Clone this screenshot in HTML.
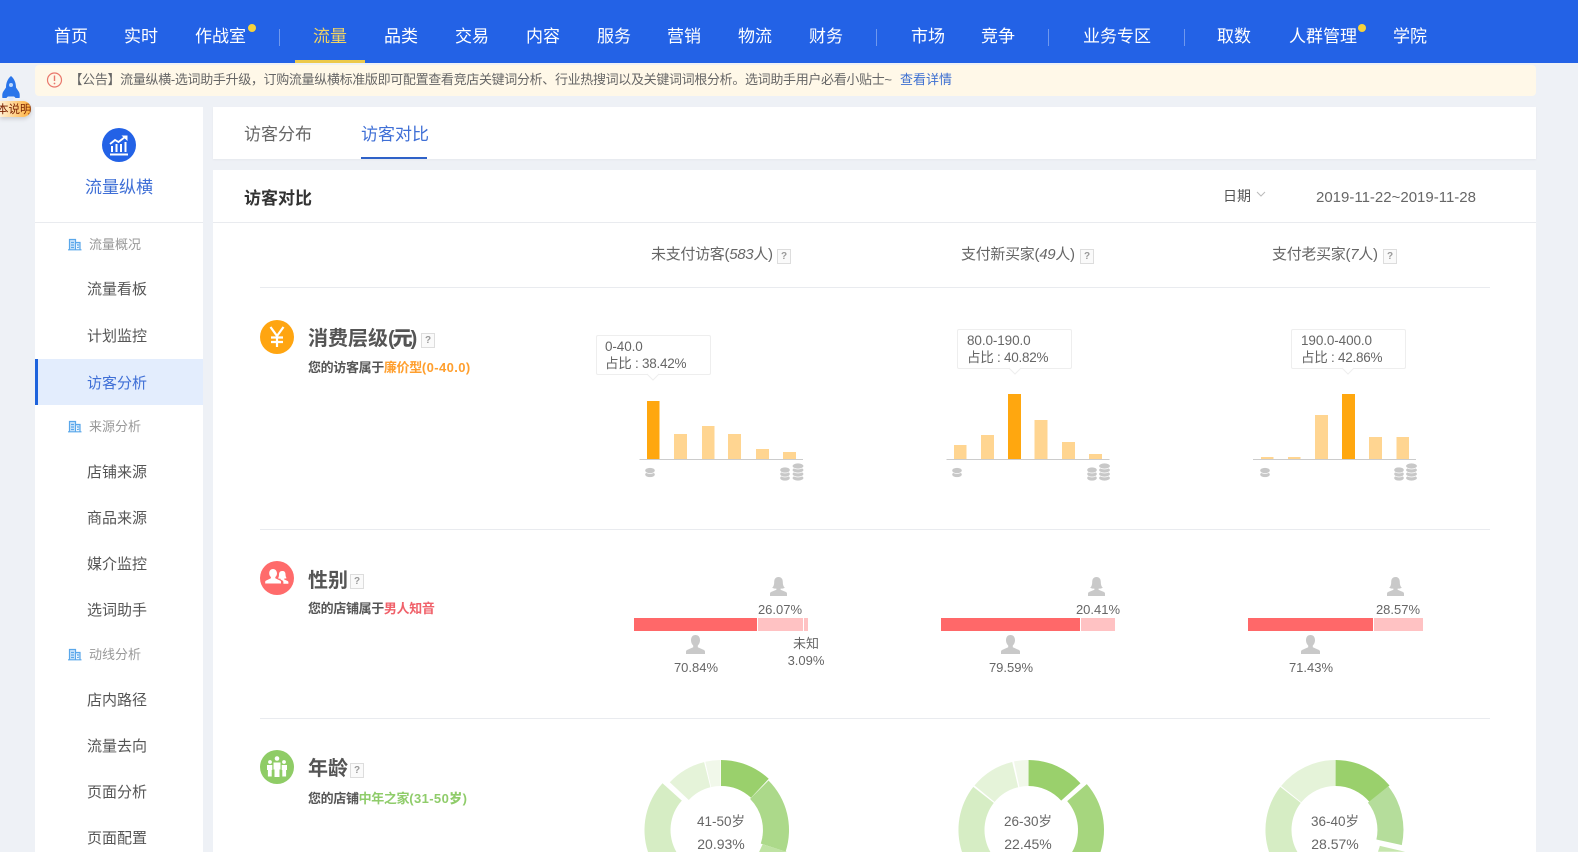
<!DOCTYPE html>
<html lang="zh"><head><meta charset="utf-8"><title>访客对比</title>
<style>
html,body{margin:0;padding:0;overflow:hidden;height:852px}
body{width:1578px;position:relative;background:#eef1f6;font-family:"Liberation Sans","Noto Sans CJK SC",sans-serif;color:#555}
.a{position:absolute;white-space:nowrap;line-height:20px}
#hd{position:absolute;left:0;top:0;width:1578px;height:63px;background:#2362e6}
.n{position:absolute;top:26px;font-size:17px;line-height:22px;color:#fff;white-space:nowrap}
.dv{position:absolute;top:29px;width:1px;height:17px;background:#6f98ee}
.dot{position:absolute;top:24px;width:8px;height:8px;border-radius:50%;background:#f6d23c}
#notice{position:absolute;left:35px;top:65px;width:1501px;height:31px;background:#fff8e8;border-radius:4px}
#side{position:absolute;left:35px;top:107px;width:168px;height:745px;background:#fff}
#tabs{position:absolute;left:213px;top:107px;width:1323px;height:52px;background:#fff;box-shadow:0 1px 2px rgba(0,0,0,.04)}
#main{position:absolute;left:213px;top:170px;width:1323px;height:682px;background:#fff}
.hr{position:absolute;height:1px;background:#e9ebef}
.s1{font-size:13px;color:#999}
.s2{font-size:15px;color:#555}
.q{position:absolute;width:12px;height:13px;border:1px solid #ddd;font-size:10px;line-height:13px;text-align:center;color:#999;font-weight:bold;background:#fafafa}
.h{font-size:15px;color:#666;letter-spacing:-.3px}
.h i{font-style:italic}
.t{font-size:20px;font-weight:bold;color:#555}
.t b{letter-spacing:-2px}
.sub{font-size:13px;font-weight:bold;color:#555;letter-spacing:-.35px}
.sub b{letter-spacing:.4px}
.tip{position:absolute;width:113px;height:38px;border:1px solid #eee;border-radius:2px;background:#fff;font-size:13.5px;line-height:17px;color:#666;white-space:nowrap}
.tip div{padding-left:8px;letter-spacing:-.1px}
.tip div+div{letter-spacing:-.25px}
.v{font-size:13px;color:#666;text-align:center;width:80px}
.d{line-height:16px}
.b{position:absolute;top:618px;height:13px}
.r{background:#ff6869}.p{background:#ffc2c3}
</style></head><body>

<div id="hd">
<span class="n" style="left:54px">首页</span>
<span class="n" style="left:124px">实时</span>
<span class="n" style="left:195px">作战室</span><i class="dot" style="left:248px"></i>
<i class="dv" style="left:279px"></i>
<span class="n" style="left:313px;color:#f0d364">流量</span>
<i style="position:absolute;left:295px;top:60px;width:70px;height:3px;background:#ecc94b"></i>
<span class="n" style="left:384px">品类</span>
<span class="n" style="left:455px">交易</span>
<span class="n" style="left:526px">内容</span>
<span class="n" style="left:597px">服务</span>
<span class="n" style="left:667px">营销</span>
<span class="n" style="left:738px">物流</span>
<span class="n" style="left:809px">财务</span>
<i class="dv" style="left:876px"></i>
<span class="n" style="left:911px">市场</span>
<span class="n" style="left:981px">竞争</span>
<i class="dv" style="left:1048px"></i>
<span class="n" style="left:1083px">业务专区</span>
<i class="dv" style="left:1184px"></i>
<span class="n" style="left:1217px">取数</span>
<span class="n" style="left:1289px">人群管理</span><i class="dot" style="left:1358px"></i>
<span class="n" style="left:1393px">学院</span>
</div>

<div id="notice"></div>
<div class="a" style="left:69.500px;top:70px;font-size:13px;letter-spacing:-.33px;color:#666">【公告】流量纵横-选词助手升级，订购流量纵横标准版即可配置查看竞店关键词分析、行业热搜词以及关键词词根分析。选词助手用户必看小贴士~</div>
<div class="a" style="left:900px;top:70px;font-size:13px;color:#3d6fd1">查看详情</div>

<div style="position:absolute;left:0;top:101px;width:31px;height:16px;border-radius:0 8px 8px 0;background:linear-gradient(90deg,#fff0d4,#ffb13c);box-shadow:0 2px 4px rgba(0,0,0,.15);overflow:hidden"><span style="position:absolute;left:-3px;top:-1px;font-size:11.5px;line-height:20px;color:#7a2200;white-space:nowrap">本说明</span></div>

<div id="side"></div>
<div class="a" style="left:85px;top:178px;font-size:17px;color:#3f6fd6">流量纵横</div>
<div class="hr" style="left:35px;top:222px;width:168px"></div>
<div style="position:absolute;left:35px;top:359px;width:168px;height:46px;background:#e3edfd"></div>
<div style="position:absolute;left:35px;top:359px;width:3px;height:46px;background:#1e63dc"></div>
<div class="a s1" style="left:89px;top:235px">流量概况</div>
<div class="a s2" style="left:87px;top:280px">流量看板</div>
<div class="a s2" style="left:87px;top:327px">计划监控</div>
<div class="a s2" style="left:87px;top:374px;color:#3f6fd6">访客分析</div>
<div class="a s1" style="left:89px;top:417px">来源分析</div>
<div class="a s2" style="left:87px;top:463px">店铺来源</div>
<div class="a s2" style="left:87px;top:509px">商品来源</div>
<div class="a s2" style="left:87px;top:555px">媒介监控</div>
<div class="a s2" style="left:87px;top:601px">选词助手</div>
<div class="a s1" style="left:89px;top:645px">动线分析</div>
<div class="a s2" style="left:87px;top:691px">店内路径</div>
<div class="a s2" style="left:87px;top:737px">流量去向</div>
<div class="a s2" style="left:87px;top:783px">页面分析</div>
<div class="a s2" style="left:87px;top:829px">页面配置</div>

<div id="tabs"></div>
<div class="a" style="left:244px;top:125px;font-size:17px;color:#666">访客分布</div>
<div class="a" style="left:361px;top:125px;font-size:17px;color:#3f6fd6">访客对比</div>
<div style="position:absolute;left:361px;top:157px;width:66px;height:2px;background:#2f62c8"></div>

<div id="main"></div>
<div class="a" style="left:244px;top:189px;font-size:17px;font-weight:bold;color:#333">访客对比</div>
<div class="hr" style="left:213px;top:222px;width:1323px"></div>
<div class="a" style="left:1223px;top:186px;font-size:14px;color:#555">日期</div>
<div class="a" style="left:1316px;top:188px;font-size:15px;color:#666">2019-11-22~2019-11-28</div>

<div class="a h" style="left:651px;top:245px">未支付访客(<i>583</i>人)</div><span class="q" style="left:777px;top:249px">?</span>
<div class="a h" style="left:961px;top:245px">支付新买家(<i>49</i>人)</div><span class="q" style="left:1080px;top:249px">?</span>
<div class="a h" style="left:1272px;top:245px">支付老买家(<i>7</i>人)</div><span class="q" style="left:1383px;top:249px">?</span>
<div class="hr" style="left:260px;top:287px;width:1230px"></div>
<div class="hr" style="left:260px;top:529px;width:1230px"></div>
<div class="hr" style="left:260px;top:718px;width:1230px"></div>

<div class="a t" style="left:308px;top:329px">消费层级<b>(元)</b></div><span class="q" style="left:421px;top:333px">?</span>
<div class="a sub" style="left:308px;top:358px">您的访客属于<span style="color:#ff9f2e">廉价型<b>(0-40.0)</b></span></div>
<div class="a t" style="left:308px;top:571px">性别</div><span class="q" style="left:350px;top:574px">?</span>
<div class="a sub" style="left:308px;top:599px">您的店铺属于<span style="color:#f0616a">男人知音</span></div>
<div class="a t" style="left:308px;top:759px">年龄</div><span class="q" style="left:350px;top:763px">?</span>
<div class="a sub" style="left:308px;top:789px">您的店铺<span style="color:#8fcc6a">中年之家<b>(31-50岁)</b></span></div>

<div class="tip" style="left:596px;top:335px"><div style="padding-top:2px">0-40.0</div><div>占比 : 38.42%</div></div>
<div class="tip" style="left:957px;top:329px"><div style="padding-top:2px;padding-left:9px">80.0-190.0</div><div style="padding-left:9px">占比 : 40.82%</div></div>
<div class="tip" style="left:1291px;top:329px"><div style="padding-top:2px;padding-left:9px">190.0-400.0</div><div style="padding-left:9px">占比 : 42.86%</div></div>

<i class="b r" style="left:634px;width:123px"></i><i class="b p" style="left:758px;width:45px"></i><i class="b p" style="left:804px;width:4px"></i>
<i class="b r" style="left:941px;width:139px"></i><i class="b p" style="left:1081px;width:34px"></i>
<i class="b r" style="left:1248px;width:125px"></i><i class="b p" style="left:1374px;width:49px"></i>

<div class="a v" style="left:740px;top:600px">26.07%</div>
<div class="a v" style="left:656px;top:658px">70.84%</div>
<div class="a v" style="left:766px;top:634px">未知</div>
<div class="a v" style="left:766px;top:651px">3.09%</div>
<div class="a v" style="left:1058px;top:600px">20.41%</div>
<div class="a v" style="left:971px;top:658px">79.59%</div>
<div class="a v" style="left:1358px;top:600px">28.57%</div>
<div class="a v" style="left:1271px;top:658px">71.43%</div>

<svg width="1578" height="852" viewBox="0 0 1578 852" style="position:absolute;left:0;top:0;pointer-events:none">
<defs>
<g id="m"><path fill="#c9c9c9" d="M9.500 0C6.400 0 5 2.400 5 5.300c0 2.200.9 4 2.200 5.200v1.800L1 15c-.7.400-1 1-1 1.800V19h19v-2.200c0-.8-.3-1.400-1-1.800l-6.200-2.700v-1.800c1.300-1.200 2.200-3 2.200-5.200C14 2.400 12.600 0 9.500 0z"/></g>
<g id="f"><path fill="#c9c9c9" d="M8.500 0C5.500 0 4.200 2.200 4.200 5c0 2.600-.6 4.500-2 5.800 1.300.8 2.800 1 4.200.8v1.200L1 15c-.7.400-1 1-1 1.800V19h17v-2.200c0-.8-.3-1.400-1-1.800l-5.400-2.200v-1.200c1.400.2 2.900 0 4.200-.8-1.400-1.300-2-3.200-2-5.800C12.800 2.200 11.500 0 8.500 0z"/></g>
<g id="c2" fill="#c8c8c8" stroke="#fff" stroke-width=".7"><ellipse cx="5" cy="7" rx="5.200" ry="3"/><ellipse cx="5" cy="3" rx="5.200" ry="3"/></g>
<g id="c3" fill="#c8c8c8" stroke="#fff" stroke-width=".7"><ellipse cx="5" cy="11" rx="5.200" ry="3"/><ellipse cx="5" cy="7" rx="5.200" ry="3"/><ellipse cx="5" cy="3" rx="5.200" ry="3"/></g>
<g id="c4" fill="#c8c8c8" stroke="#fff" stroke-width=".7"><ellipse cx="5.500" cy="15" rx="5.800" ry="3"/><ellipse cx="5.500" cy="11" rx="5.800" ry="3"/><ellipse cx="5.500" cy="7" rx="5.800" ry="3"/><ellipse cx="5.500" cy="3" rx="5.800" ry="3"/></g>
<g id="bd"><path fill="#cfe6fb" stroke="#5aa7ea" stroke-width="1.200" d="M1.500 11.500V1.500h6v10M7.500 4.500h4.500v7"/><path stroke="#5aa7ea" stroke-width="1.200" d="M0 11.800h13.500M3 4.500h3M3 7h3M3 9.500h3M9 7h1.800M9 9.500h1.800" fill="none"/></g>
</defs>

<!-- rocket -->
<path fill="#2a75ea" d="M11 76c3.500 3 5 7 5 11.500l3 4.500c.8 1.500.9 3.500.6 6h-4l-1.500-1.500h-6.200L6.400 98h-4c-.3-2.500-.2-4.500.6-6l3-4.500C6 83 7.500 79 11 76z"/>
<circle cx="11" cy="85" r="2" fill="#bcd8ff"/>
<path fill="#dbe9ff" d="M8 97.500h6l-1 3H9z"/>

<!-- notice icon -->
<circle cx="54.500" cy="80" r="7" fill="none" stroke="#e9786c" stroke-width="1.200"/>
<path d="M54.500 75.500v5.500" stroke="#e9786c" stroke-width="1.400"/><circle cx="54.500" cy="83.500" r=".9" fill="#e9786c"/>

<!-- sidebar logo -->
<circle cx="119" cy="145" r="17" fill="#2362e6"/>
<path fill="none" stroke="#fff" stroke-width="2" d="M110 154.500h18M112 152v-6M116.500 152v-8M121 152v-8M125.500 152v-10"/>
<path fill="none" stroke="#fff" stroke-width="1.800" d="M110 144l5-4 3.500 2 6.500-5"/><path fill="#fff" d="M121.500 135.500h6v5.500z"/>

<use href="#bd" x="68" y="238"/><use href="#bd" x="68" y="420"/><use href="#bd" x="68" y="648"/>
<path d="M1257 192l4 4 4-4" fill="none" stroke="#bbb"/>

<!-- row icons -->
<circle cx="277" cy="337" r="17" fill="#ffa511"/>
<path fill="none" stroke="#fff" stroke-width="2.200" d="M270.500 327l6.500 9 6.500-9M277 336v11M271 337.500h12M271 342h12"/>
<circle cx="277" cy="578" r="17" fill="#ff6b6b"/>
<path fill="#fff" d="M273 569c-2.500 0-3.800 2-3.800 4.200 0 1.700.7 3 1.700 3.800v1.300l-4.900 2.300c-.5.300-.8.700-.8 1.400v1.500h15.800V582c0-.7-.3-1.100-.8-1.400l-4.900-2.300V577c1-.8 1.700-2.100 1.700-3.800C276.800 571 275.500 569 273 569z"/>
<path fill="#fff" d="M282 571c-2 0-3 1.600-3 3.400 0 1.700-.3 3-1 3.800 1 .4 1.800.5 2.600.5v.8l1.800 1c.6.400 1 1 1 1.800v1.500h5v-1.500c0-.7-.3-1-.8-1.300l-3.500-1.600v-.8c.9 0 1.700-.1 2.500-.5-.7-.8-1.100-2.100-1.100-3.800 0-1.800-1-3.300-2.500-3.300z"/>
<circle cx="277" cy="767" r="17" fill="#8fcc66"/>
<g fill="#fff"><circle cx="277" cy="758.500" r="2.300"/><path d="M273.500 762.500h7v7h-1v7.500h-5v-7.500h-1z"/><circle cx="270" cy="762" r="1.900"/><path d="M267 765h5.300v5h-.6v6.500h-3.800V770H267z"/><circle cx="284" cy="762" r="1.900"/><path d="M281.700 765h5.300v5h-.9v6.500h-3.800V770h-.6z"/></g>

<!-- bars -->
<g fill="#ffd591">
<rect x="674" y="434" width="13" height="25"/><rect x="702" y="426" width="12.500" height="33"/><rect x="728" y="434" width="13" height="25"/><rect x="756" y="449" width="13" height="10"/><rect x="783" y="452" width="13" height="7"/>
<rect x="954" y="445" width="12.500" height="14"/><rect x="981" y="435" width="13" height="24"/><rect x="1034.500" y="420" width="13" height="39"/><rect x="1062" y="442" width="13" height="17"/><rect x="1089" y="454" width="13" height="5"/>
<rect x="1261" y="457" width="12.500" height="2"/><rect x="1288" y="457" width="12.500" height="2"/><rect x="1315" y="415" width="13" height="44"/><rect x="1369" y="437" width="13" height="22"/><rect x="1396.500" y="437" width="12.500" height="22"/>
</g>
<g fill="#ffa70f"><rect x="647" y="401" width="12.500" height="58"/><rect x="1008" y="394" width="13" height="65"/><rect x="1342" y="394" width="13" height="65"/></g>
<g fill="#ccc"><rect x="639.500" y="459" width="163.500" height="1"/><rect x="946.500" y="459" width="163" height="1"/><rect x="1253" y="459" width="163" height="1"/></g>
<use href="#c2" x="645" y="467.500"/><use href="#c3" x="780" y="467"/><use href="#c4" x="792.500" y="463"/>
<use href="#c2" x="952" y="467.500"/><use href="#c3" x="1087" y="467"/><use href="#c4" x="1099" y="463"/>
<use href="#c2" x="1260" y="467.500"/><use href="#c3" x="1394" y="467"/><use href="#c4" x="1406" y="463"/>

<!-- tip arrows -->
<g fill="#fff" stroke="#eee"><path d="M647 374l6 6 6-6"/><path d="M1009 368l6 6 6-6"/><path d="M1342 368l6 6 6-6"/></g>
<g fill="#fff"><rect x="647.500" y="372" width="11" height="2"/><rect x="1009.500" y="366" width="11" height="2"/><rect x="1342.500" y="366" width="11" height="2"/></g>

<!-- persons -->
<use href="#f" x="770" y="577"/><use href="#m" x="686" y="635"/>
<use href="#f" x="1088" y="577"/><use href="#m" x="1001" y="635"/>
<use href="#f" x="1387" y="577"/><use href="#m" x="1301" y="635"/>

<!-- donut 1 -->
<path fill="#9ad06c" d="M721 760A70 70 0 0 1 768.700 778.800L751 797.800A44 44 0 0 0 721 786Z"/>
<path fill="#acd98a" d="M768.500 780.500A70 70 0 0 1 785.600 851.600L760.800 843.600A44 44 0 0 0 750.100 798.900Z"/>
<path fill="#bfe3a3" d="M762.600 844.300L787 852H759.100Z"/>
<path fill="#d6edc4" d="M648 852A70 70 0 0 1 662.500 783.200L681.800 800.600A44 44 0 0 0 676.400 852Z"/>
<path fill="#e5f3d9" d="M669.800 782.300A70 70 0 0 1 704.100 762.100L710.400 787.300A44 44 0 0 0 688.800 800Z"/>
<path fill="#f1f8ea" d="M705.300 761.800A70 70 0 0 1 720.400 760L720.600 786A44 44 0 0 0 711.100 787.100Z"/>
<!-- donut 2 -->
<path fill="#9ad06c" d="M1028.500 760A70 70 0 0 1 1080.500 783.200L1061.200 800.600A44 44 0 0 0 1028.500 786Z"/>
<path fill="#a6d67e" d="M1086.800 784.100A70 70 0 0 1 1100.500 852H1072.100A44 44 0 0 0 1067.200 801.100Z"/>
<path fill="#d6edc4" d="M962 852A70 70 0 0 1 973.300 786.900L993.800 802.900A44 44 0 0 0 990.400 852Z"/>
<path fill="#e5f3d9" d="M974.500 785.500A70 70 0 0 1 1012.200 762L1018.200 787.200A44 44 0 0 0 994.500 802Z"/>
<path fill="#f1f8ea" d="M1014 761.500A70 70 0 0 1 1028 760L1028.200 786A44 44 0 0 0 1019.400 787Z"/>
<!-- donut 3 -->
<path fill="#9ad06c" d="M1335.500 760A70 70 0 0 1 1389.500 785.500L1369.500 802A44 44 0 0 0 1335.500 786Z"/>
<path fill="#b5dd9b" d="M1388.300 786.400A70 70 0 0 1 1401.800 845.100L1376.400 839.500A44 44 0 0 0 1367.900 802.600Z"/>
<path fill="#c6e6ad" d="M1405.200 851.800H1378L1379.900 845.900Z"/>
<path fill="#d6edc4" d="M1269 852A70 70 0 0 1 1280.300 786.900L1300.800 802.900A44 44 0 0 0 1297.400 852Z"/>
<path fill="#e5f3d9" d="M1281.100 786A70 70 0 0 1 1335 760L1335.200 786A44 44 0 0 0 1301.300 802.300Z"/>
</svg>

<div class="a v d" style="left:681px;top:814px;font-size:13.5px">41-50岁</div>
<div class="a v d" style="left:681px;top:836px;font-size:14px">20.93%</div>
<div class="a v d" style="left:988px;top:814px;font-size:13.5px">26-30岁</div>
<div class="a v d" style="left:988px;top:836px;font-size:14px">22.45%</div>
<div class="a v d" style="left:1295px;top:814px;font-size:13.5px">36-40岁</div>
<div class="a v d" style="left:1295px;top:836px;font-size:14px">28.57%</div>
</body></html>
